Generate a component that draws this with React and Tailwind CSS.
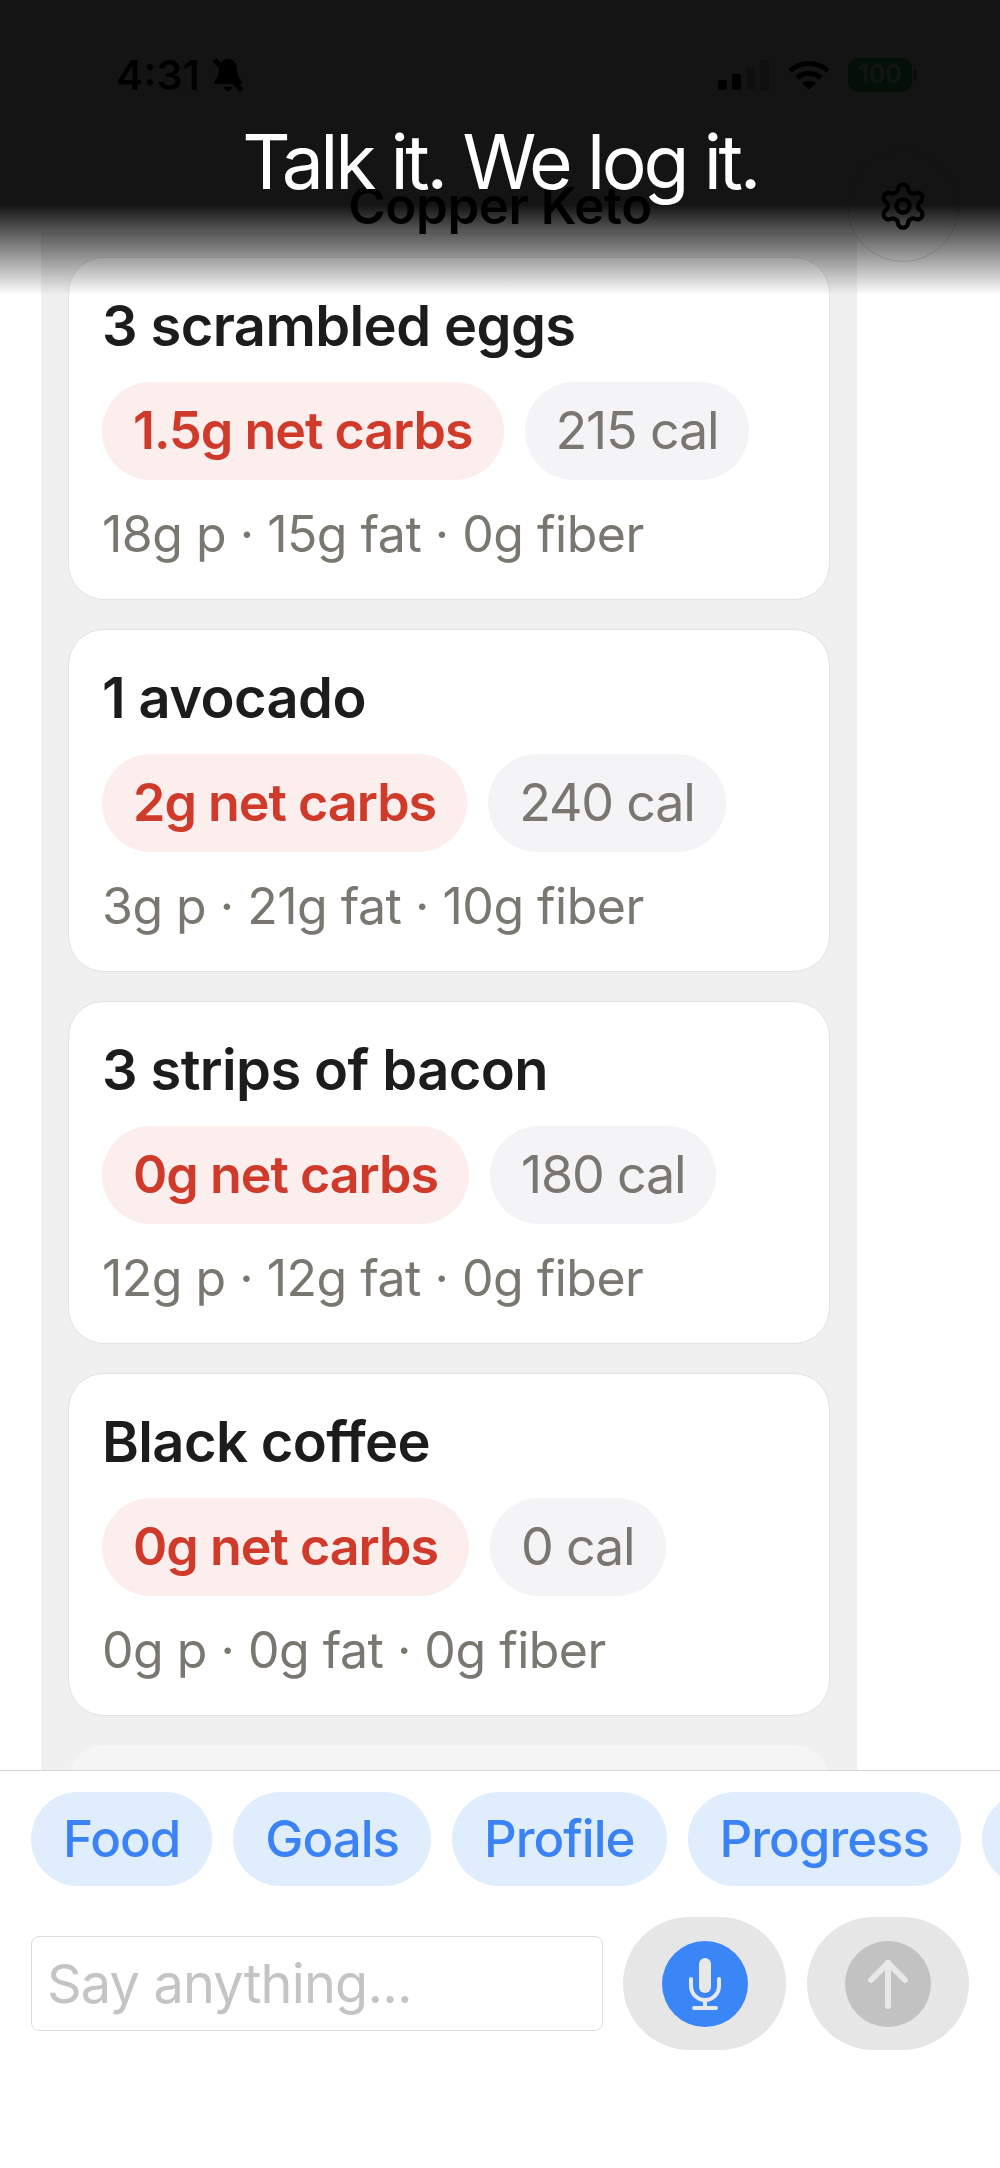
// App.jsx
import { Settings } from 'lucide-react';

const foods = [
    { name: '3 scrambled eggs', carbs: '1.5g net carbs', cal: '215 cal', meta: '18g p · 15g fat · 0g fiber' },
    { name: '1 avocado', carbs: '2g net carbs', cal: '240 cal', meta: '3g p · 21g fat · 10g fiber' },
    { name: '3 strips of bacon', carbs: '0g net carbs', cal: '180 cal', meta: '12g p · 12g fat · 0g fiber' },
    { name: 'Black coffee', carbs: '0g net carbs', cal: '0 cal', meta: '0g p · 0g fat · 0g fiber' },
];

const chips = ['Food', 'Goals', 'Profile', 'Progress', 'Settings'];

function FoodCard({ food }) {
    return (
        <div className="shrink-0 h-[343px] rounded-[36px] border border-[#e2e2e2] bg-white pl-[33px] pt-[36px]">
            <p className="text-[56px] leading-[64px] font-semibold text-[#1c1c1c] tracking-[-0.6px]">{food.name}</p>
            <div className="flex gap-[21px] mt-[24px]">
                <span className="h-[98px] flex items-center px-[31px] rounded-full bg-[#fbeeec] text-[#cf3a2b] text-[52px] font-semibold tracking-[-1px]">
                    {food.carbs}
                </span>
                <span className="h-[98px] flex items-center px-[31px] rounded-full bg-[#f4f4f6] text-[#7a7670] text-[52px] tracking-[-1.2px]">
                    {food.cal}
                </span>
            </div>
            <p className="mt-[26px] text-[50px] leading-[56px] text-[#7a7670] tracking-[-0.5px]">{food.meta}</p>
        </div>
    );
}

function StatusBar() {
    return (
        <div className="h-[150px] flex items-start justify-between pl-[116px] pr-[83px] pt-[50px]">
            <div className="flex items-center gap-[9px]">
                <span className="text-[41px] leading-[50px] font-semibold text-black">4:31</span>
                <svg width="38" height="36" viewBox="0 0 36 40" fill="black">
                    <path d="M18 2c-6 0-10 5-10 12 0 6-2 9-5 13v3h30v-3c-3-4-5-7-5-13 0-7-4-12-10-12z" />
                    <path d="M13 33h10c-1 3-3 5-5 5s-4-2-5-5z" />
                    <path d="M3 3l30 34" stroke="#141414" strokeWidth="6" />
                    <path d="M3 3l30 34" stroke="black" strokeWidth="3" />
                </svg>
            </div>
            <div className="flex items-center gap-[18px] h-[50px]">
                <svg width="52" height="30" viewBox="0 0 52 30">
                    <rect x="0" y="20" width="9" height="10" rx="2" fill="black" />
                    <rect x="14" y="14" width="9" height="16" rx="2" fill="black" />
                    <rect x="28" y="7" width="9" height="23" rx="2" fill="#bbbbbb" />
                    <rect x="42" y="0" width="9" height="30" rx="2" fill="#bbbbbb" />
                </svg>
                <svg width="42" height="30" viewBox="0 0 42 30" fill="none" stroke="black" strokeWidth="5">
                    <path d="M2 11C12 1 30 1 40 11" />
                    <path d="M9 18c7-6 17-6 24 0" />
                    <path d="M21 30l-7-7c4-3 10-3 14 0z" fill="black" stroke="none" />
                </svg>
                <div className="flex items-center gap-[1px]">
                    <div className="w-[64px] h-[34px] rounded-[10px] bg-[#34c759] flex items-center justify-center text-[25px] font-semibold text-white">
                        100
                    </div>
                    <div className="w-[4px] h-[12px] rounded-r-full bg-[#999999]" />
                </div>
            </div>
        </div>
    );
}

export default function App() {
    return (
        <div className="relative w-[1000px] h-[2168px] overflow-hidden bg-white flex flex-col font-['Inter',sans-serif]">
            <StatusBar />

            {/* Cabecera */}
            <div className="relative h-[82px] shrink-0">
                <h1 className="mt-[24px] text-center text-[51px] leading-[64px] font-semibold text-black tracking-[-0.4px]">
                    Copper Keto
                </h1>
                <button className="absolute z-10 left-[847px] top-0 w-[112px] h-[112px] rounded-full border border-[#dddddd] bg-white flex items-center justify-center">
                    <Settings size={52} strokeWidth={2} color="black" />
                </button>
            </div>

            {/* Lista */}
            <div className="flex-1 min-h-0 overflow-hidden ml-[41px] w-[816px] bg-[#f0f0f0] px-[27px] pt-[25px] flex flex-col gap-[29px]">
                {foods.map((food) => (
                    <FoodCard key={food.name} food={food} />
                ))}
                {/* La siguiente tarjeta entra vacia y casi transparente */}
                <div className="shrink-0 h-[343px] rounded-[36px] bg-[#f5f5f5]" />
            </div>

            {/* Barra inferior */}
            <div className="relative z-10 h-[398px] shrink-0 border-t border-[#d4d4d4] bg-white">
                <div className="flex gap-[21px] pl-[31px] pt-[21px] overflow-hidden">
                    {chips.map((chip) => (
                        <span key={chip} className="shrink-0 h-[94px] flex items-center px-[32px] rounded-full bg-[#e0edfc] text-[#3b82f6] text-[51px] font-medium tracking-[-1px]">
                            {chip}
                        </span>
                    ))}
                </div>
                <div className="flex items-center pl-[31px] mt-[31px]">
                    <input
                        readOnly
                        placeholder="Say anything..."
                        className="w-[572px] h-[95px] rounded-[8px] border border-[#dddddd] px-[15px] text-[54px] tracking-[-0.8px] placeholder:text-[#c4c4c4]"
                    />
                    <button className="ml-[20px] w-[163px] h-[133px] rounded-full bg-[#e6e6e6] flex items-center justify-center">
                        <span className="w-[86px] h-[86px] rounded-full bg-[#3b86f7] flex items-center justify-center">
                            <svg width="86" height="86" viewBox="0 0 86 86" fill="none" stroke="#e8e8e8" strokeLinecap="round">
                                <rect x="37" y="17" width="12" height="35" rx="6" fill="#e8e8e8" stroke="none" />
                                <path d="M29 38v7a14 14 0 0 0 28 0v-7" strokeWidth="4" />
                                <path d="M43 59v7" strokeWidth="4" />
                                <path d="M32 67h22" strokeWidth="4" />
                            </svg>
                        </span>
                    </button>
                    <button className="ml-[21px] w-[162px] h-[133px] rounded-full bg-[#e6e6e6] flex items-center justify-center">
                        <span className="w-[86px] h-[86px] rounded-full bg-[#c2c2c2] flex items-center justify-center">
                            <svg width="86" height="86" viewBox="0 0 86 86" fill="none" stroke="#e8e8e8" strokeWidth="6" strokeLinecap="round" strokeLinejoin="round">
                                <path d="M43 65V22" />
                                <path d="M26 39l17-17 17 17" />
                            </svg>
                        </span>
                    </button>
                </div>
            </div>

            {/* Capa oscura con el titulo */}
            <div className="absolute z-20 inset-x-0 top-0 h-[295px] bg-[linear-gradient(to_bottom,rgba(0,0,0,0.92)_0px,rgba(0,0,0,0.92)_205px,rgba(0,0,0,0)_295px)] pointer-events-none">
                <p className="pt-[116px] text-center text-[75px] leading-[92px] text-white tracking-[-3.4px]">
                    Talk it. We log it.
                </p>
            </div>
        </div>
    );
}
